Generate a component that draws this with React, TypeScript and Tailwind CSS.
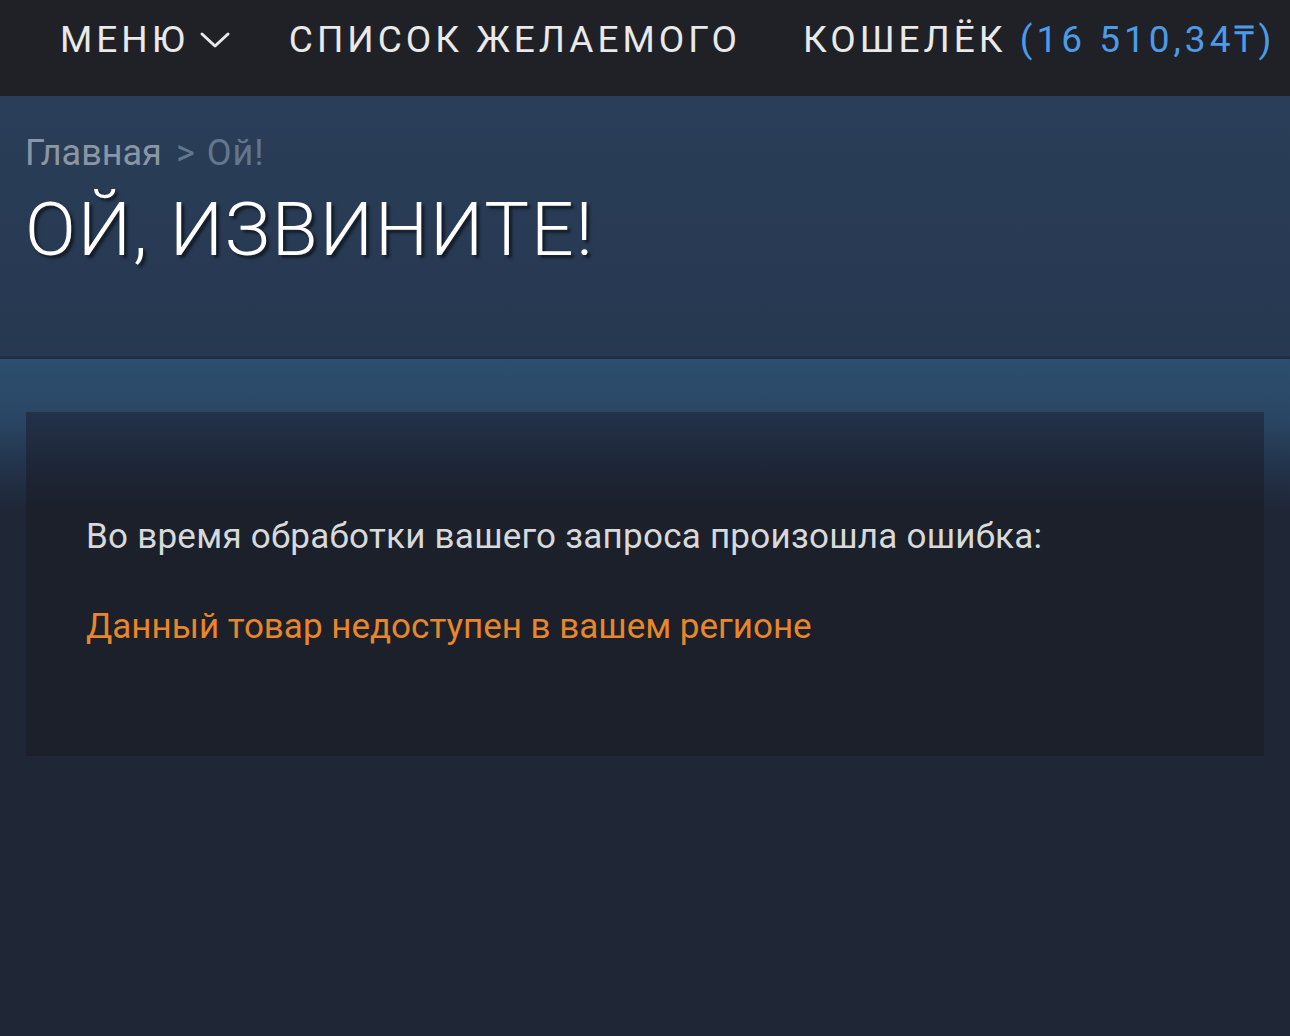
import React from "react";

export default function App() {
  return (
    <div className="min-h-[1036px] w-full bg-[#1f2737]" style={{ fontFamily: "Roboto, 'Liberation Sans', sans-serif" }}>
      <header className="flex h-[96px] items-center bg-[#1f2126] pb-[16px] pl-[60px] text-[37px] tracking-[4px] text-[#e9e9ea]">
        <div className="flex items-center">
          <span>МЕНЮ</span>
          <svg className="ml-[10px]" width="32" height="20" viewBox="0 0 32 20" fill="none">
            <path d="M3 4 L16 16 L29 4" stroke="#e9e9ea" strokeWidth="3" strokeLinecap="round" strokeLinejoin="round" />
          </svg>
        </div>
        <span className="ml-[58px]">СПИСОК ЖЕЛАЕМОГО</span>
        <span className="ml-[62px]">КОШЕЛЁК <span className="text-[#4b9be8]">(16 510,34₸)</span></span>
      </header>

      <section className="h-[260px] bg-gradient-to-b from-[#2a3e59] to-[#273850] pl-[25px] pt-[36px]">
        <div className="flex items-baseline text-[36px] leading-[1.2] text-[#8a96a3]">
          <span>Главная</span>
          <span className="ml-[14px] text-[#62778e]">&gt;</span>
          <span className="ml-[12px] text-[#62778e] tracking-[1px]">Ой!</span>
        </div>
        <h1 className="mt-[13px] text-[75px] font-light leading-[1.1] tracking-[2px] text-white [text-shadow:3px_3px_3px_rgba(0,0,0,0.55)]">
          ОЙ, ИЗВИНИТЕ!
        </h1>
      </section>
      <div className="h-[3px] bg-gradient-to-b from-[#22304a] to-[#1f2b40]" />

      <div className="bg-[linear-gradient(to_bottom,#2d4e6f_0px,#2a4664_60px,#22324a_110px,#1f2737_150px)] px-[26px] pt-[53px] pb-[280px]">
        <div className="h-[344px] bg-[linear-gradient(to_bottom,#223249_0px,#1e2739_50px,#1b202a_95px,#1b202a_100%)] pl-[60px] pt-[104px]">
          <p className="text-[35px] leading-[1.2] tracking-[0.25px] text-[#d8d9db]">Во время обработки вашего запроса произошла ошибка:</p>
          <p className="mt-[48px] text-[35px] leading-[1.2] text-[#e8862c]">Данный товар недоступен в вашем регионе</p>
        </div>
      </div>
    </div>
  );
}
